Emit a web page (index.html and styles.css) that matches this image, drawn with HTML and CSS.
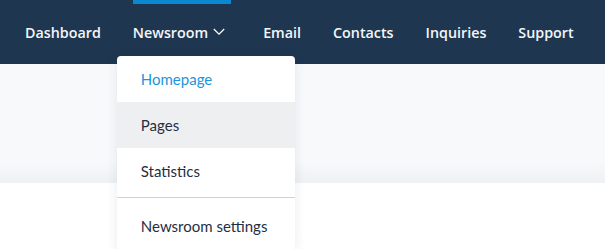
FILE: index.html
```html
<!DOCTYPE html>
<html>
<head>
<meta charset="utf-8">
<link rel="stylesheet" href="styles.css">
</head>
<body>
<header class="nav">
  <div class="nav-item">Dashboard</div>
  <div class="nav-item active">
    <span class="bar"></span>
    Newsroom
    <svg class="chev" width="12" height="8" viewBox="0 0 12 8"><path d="M0.8 1 L6 6.2 L11.2 1" fill="none" stroke="#ffffff" stroke-width="1.2"/></svg>
    <div class="dropdown">
      <div class="dd-item current">Homepage</div>
      <div class="dd-item hover">Pages</div>
      <div class="dd-item">Statistics</div>
      <div class="dd-sep"></div>
      <div class="dd-item last">Newsroom settings</div>
    </div>
  </div>
  <div class="nav-item">Email</div>
  <div class="nav-item">Contacts</div>
  <div class="nav-item">Inquiries</div>
  <div class="nav-item">Support</div>
</header>
<main class="content">
  <div class="band"></div>
</main>
</body>
</html>
```

FILE: styles.css
```css
html, body {
  margin: 0;
  padding: 0;
  background: #ffffff;
}
body {
  min-height: 100vh;
}
.content {
  min-height: 185px;
}
.nav {
  height: 64px;
  background: #1f3651;
  display: flex;
  align-items: center;
  padding-left: 9px;
  font-family: "Open Sans", "Liberation Sans", sans-serif;
  font-weight: 600;
  font-size: 14.3px;
  color: #f4f6f9;
}
.nav-item {
  position: relative;
  height: 64px;
  display: flex;
  align-items: center;
  padding: 0 16px;
  white-space: nowrap;
}
.chev {
  margin-left: 5px;
  margin-right: 6px;
}
.bar {
  position: absolute;
  left: 16px;
  right: 16px;
  top: 0;
  height: 4px;
  background: #0b88d2;
}
.dropdown {
  position: absolute;
  left: 0;
  top: 56px;
  width: 178px;
  background: #ffffff;
  border-radius: 4px;
  box-shadow: 0 2px 12px rgba(30, 50, 80, 0.10);
  font-family: "Lato", "Open Sans", sans-serif;
  font-weight: 400;
  font-size: 15px;
  color: #1f2e45;
  z-index: 5;
}
.dd-item {
  height: 46px;
  display: flex;
  align-items: center;
  padding-left: 24px;
}
.dd-item.current {
  color: #1b95dc;
}
.dd-item.hover {
  background: #eeeff1;
}
.dd-sep {
  height: 1px;
  margin-top: 3px;
  background: #c9d3df;
}
.dd-item.last {
  height: 52px;
  padding-top: 4px;
  box-sizing: border-box;
}
.band {
  height: 119px;
  background: linear-gradient(to bottom, #f8f9fb 0%, #f8f9fb 82%, #eef0f3 100%);
}
```
